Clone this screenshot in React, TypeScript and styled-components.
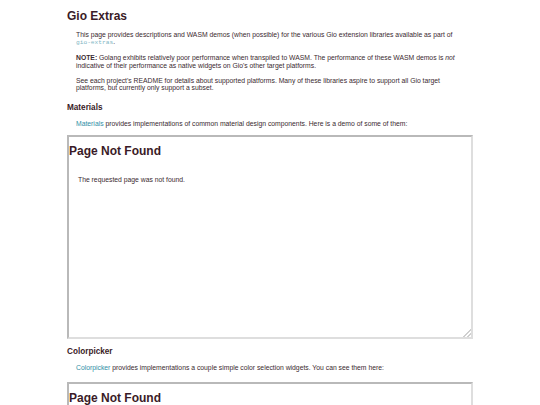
import React from "react"
import styled, { createGlobalStyle } from "styled-components"

const GlobalStyle = createGlobalStyle`
    html, body {
        margin: 0;
        padding: 0;
        background: #fff;
    }
    body {
        font-family: "Liberation Sans", Arial, sans-serif;
        color: #3b2a30;
        overflow: hidden;
    }
`

interface FrameProps {
    gap: number
}

const NotFoundFrame = (props: FrameProps) => {
    return (
        <Frame $gap={props.gap}>
            <FrameTitle>Page Not Found</FrameTitle>
            <FrameText>The requested page was not found.</FrameText>
        </Frame>
    )
}

export default function App() {
    return (
        <>
            <GlobalStyle />
            <Page>
                <Title>Gio Extras</Title>
                <Paragraph>
                    This page provides descriptions and WASM demos (when possible) for the various Gio extension libraries available as part of <Code>gio-extras</Code>.
                </Paragraph>
                <Paragraph>
                    <strong>NOTE:</strong> Golang exhibits relatively poor performance when transpiled to WASM. The performance of these WASM demos is <em>not</em> indicative of their performance as native widgets on Gio's other target platforms.
                </Paragraph>
                <Paragraph>
                    See each project's README for details about supported platforms. Many of these libraries aspire to support all Gio target platforms, but currently only support a subset.
                </Paragraph>

                <Section>Materials</Section>
                <Paragraph>
                    <Link>Materials</Link> provides implementations of common material design components. Here is a demo of some of them:
                </Paragraph>
                <NotFoundFrame gap={7} />

                <Section>Colorpicker</Section>
                <Paragraph>
                    <Link>Colorpicker</Link> provides implementations a couple simple color selection widgets. You can see them here:
                </Paragraph>
                <NotFoundFrame gap={10} />
            </Page>
        </>
    )
}

const Page = styled.div`
    width: 406px;
    margin: 0 auto;
    padding-top: 9px;
`

const Title = styled.h1`
    font-size: 12px;
    line-height: 15px;
    font-weight: bold;
    color: #3a1b27;
    margin: 0 0 7px 0;
`

const Section = styled.h3`
    font-size: 8.2px;
    line-height: 10px;
    font-weight: bold;
    color: #3a1b27;
    margin: 12px 0 7px 0;
`

const Paragraph = styled.p`
    font-size: 6.8px;
    line-height: 7.4px;
    margin: 0 9px 7.5px 9px;
`

const Code = styled.code`
    font-family: "Liberation Mono", "Courier New", monospace;
    font-size: 6.2px;
    color: #7fb6c4;
    white-space: nowrap;
`

const Link = styled.span`
    color: #2f8fa6;
`

const Frame = styled.div<{ $gap: number }>`
    box-sizing: border-box;
    width: 406px;
    height: 204px;
    border-style: solid;
    border-width: 2px;
    border-color: #b9b9b9 #dedede #dedede #b9b9b9;
    resize: both;
    overflow: hidden;
    margin: ${p => p.$gap}px 0 -4px 0;

    &::-webkit-resizer {
        background:
            linear-gradient(135deg, transparent 72%, #cfcfcf 72%, #cfcfcf 79%, transparent 79%),
            linear-gradient(135deg, transparent 86%, #cfcfcf 86%, #cfcfcf 93%, transparent 93%);
    }
`

const FrameTitle = styled.h1`
    font-size: 12px;
    line-height: 15px;
    font-weight: bold;
    color: #3a1b27;
    margin: 7px 0 0 0;
`

const FrameText = styled.p`
    font-size: 6.8px;
    line-height: 7.4px;
    margin: 17px 9px 0 9px;
`
